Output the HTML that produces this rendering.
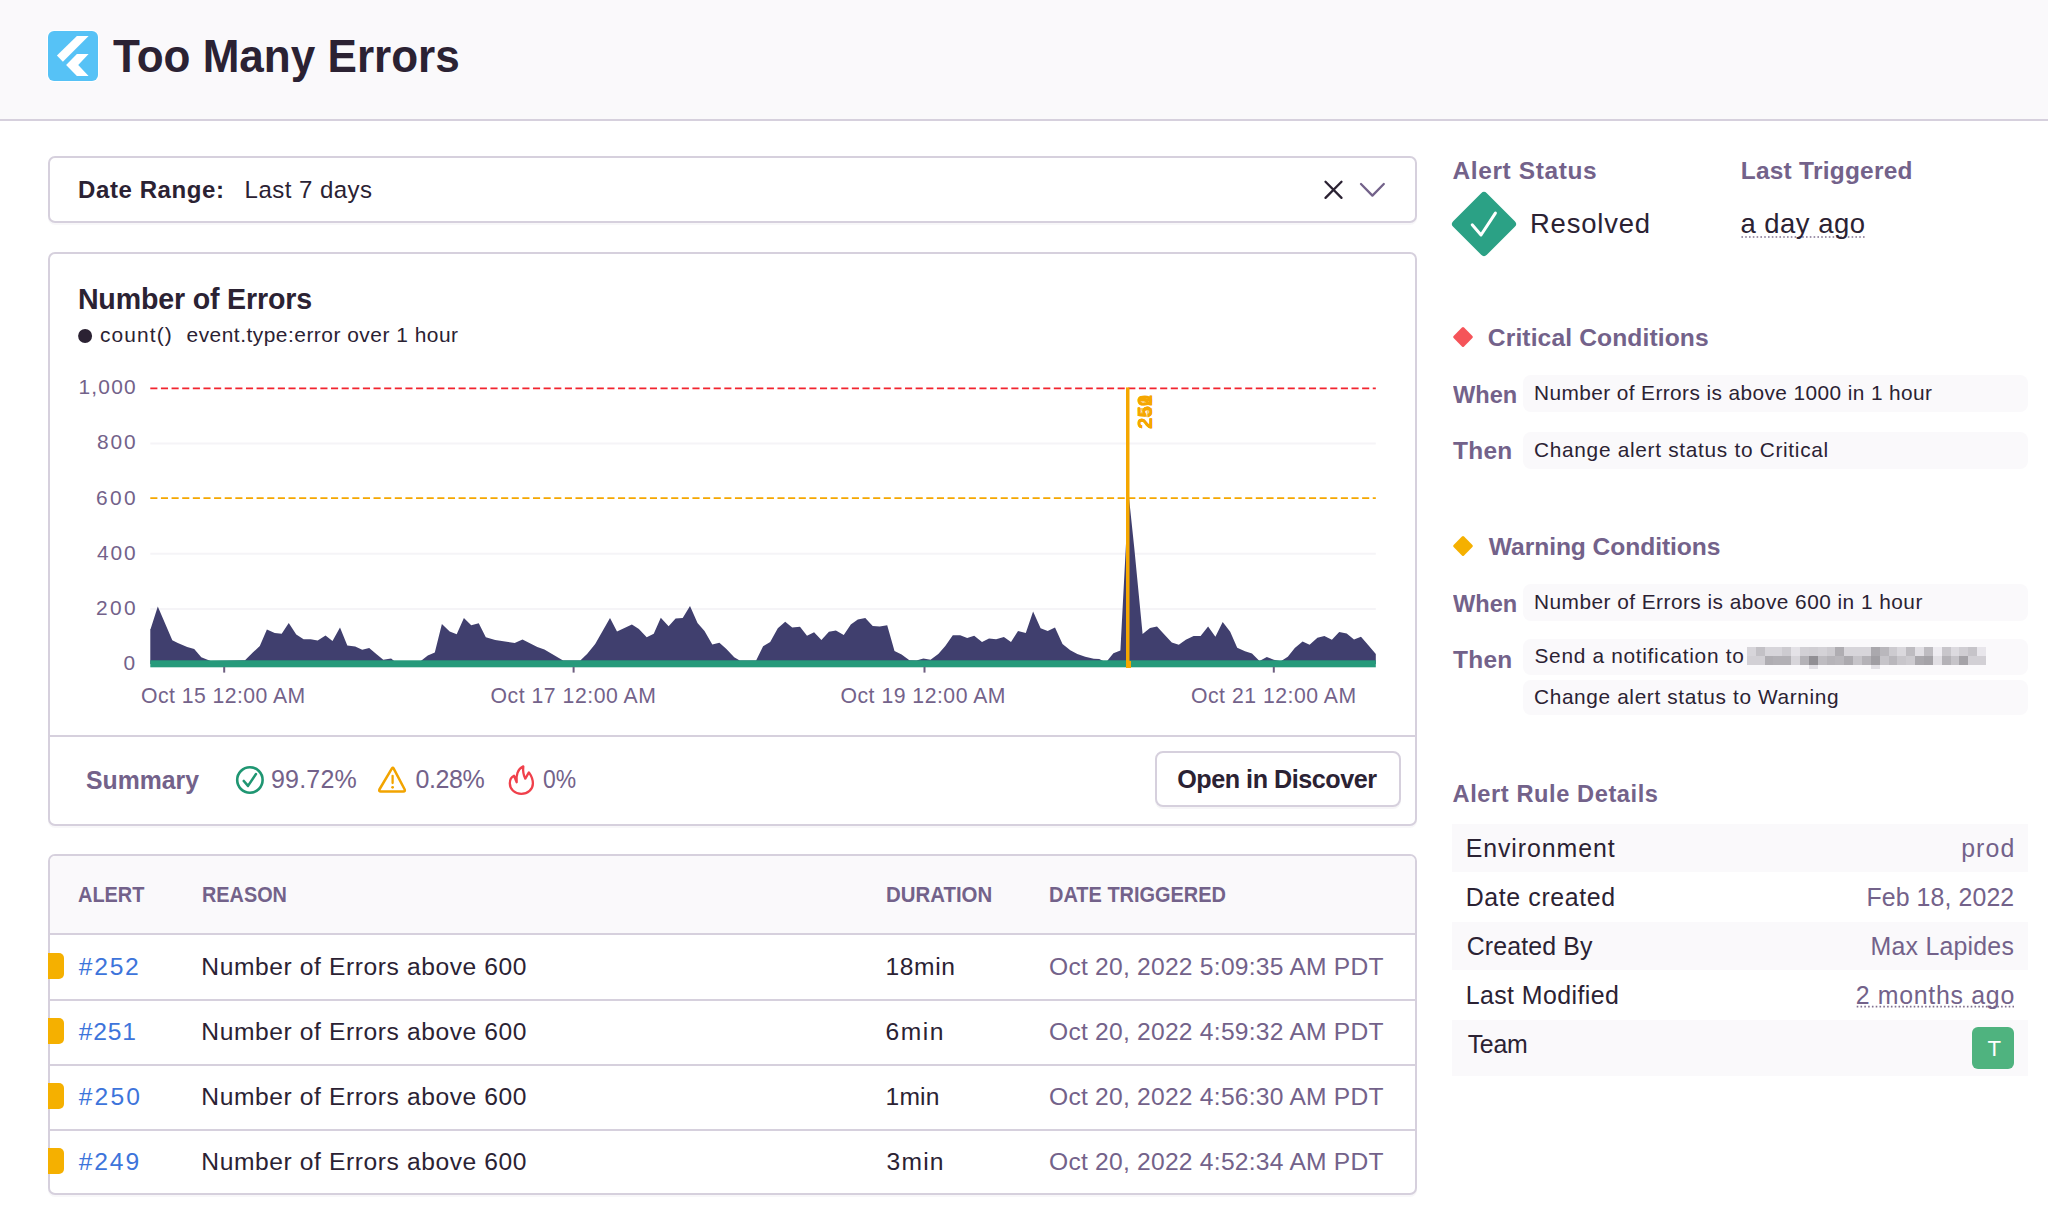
<!DOCTYPE html><html><head><meta charset="utf-8"><style>
html,body{margin:0;padding:0;}body{width:2048px;height:1220px;overflow:hidden;background:#FFFFFF;position:relative;font-family:"Liberation Sans",sans-serif;}
.a{position:absolute;box-sizing:border-box;}
.t{position:absolute;white-space:pre;margin:0;}
.panel{position:absolute;box-sizing:border-box;border:2px solid #D6D0DD;border-radius:7px;background:#fff;box-shadow:0 2px 0 rgba(37,11,54,0.03);}
.cond{position:absolute;background:#FAF9FB;border-radius:8px;}
</style></head><body>
<div class="a" style="left:0;top:0;width:2048px;height:119px;background:#FAF9FB;border-bottom:2px solid #D6D0DD;height:121px"></div>
<div class="panel" style="left:48px;top:156px;width:1369px;height:67px"></div>
<div class="panel" style="left:48px;top:252px;width:1369px;height:574px"></div>
<div class="a" style="left:50px;top:735px;width:1365px;height:2px;background:#D6D0DD"></div>
<div class="a" style="left:1155px;top:751px;width:246px;height:56px;border:2px solid #D6D0DD;border-radius:8px;background:#fff;box-shadow:0 2px 0 rgba(37,11,54,0.04)"></div>
<div class="panel" style="left:48px;top:854px;width:1369px;height:341px;overflow:hidden"><div class="a" style="left:0;top:0;width:100%;height:79px;background:#FAF9FB;border-bottom:2px solid #D6D0DD"></div><div class="a" style="left:0;top:143px;width:100%;height:2px;background:#D6D0DD"></div><div class="a" style="left:0;top:208px;width:100%;height:2px;background:#D6D0DD"></div><div class="a" style="left:0;top:273px;width:100%;height:2px;background:#D6D0DD"></div></div>
<div class="a" style="left:48px;top:953px;width:16px;height:26px;background:#F5B000;border-radius:0 5px 5px 0"></div>
<div class="a" style="left:48px;top:1018px;width:16px;height:26px;background:#F5B000;border-radius:0 5px 5px 0"></div>
<div class="a" style="left:48px;top:1083px;width:16px;height:26px;background:#F5B000;border-radius:0 5px 5px 0"></div>
<div class="a" style="left:48px;top:1148px;width:16px;height:26px;background:#F5B000;border-radius:0 5px 5px 0"></div>
<div class="cond" style="left:1523px;top:375px;width:1506px;height:37px;width:505px"></div>
<div class="cond" style="left:1523px;top:432px;width:1506px;height:37px;width:505px"></div>
<div class="cond" style="left:1523px;top:584px;width:1506px;height:37px;width:505px"></div>
<div class="cond" style="left:1523px;top:638.5px;width:1506px;height:36.5px;width:505px"></div>
<div class="cond" style="left:1523px;top:679.7px;width:1506px;height:35.3px;width:505px"></div>
<div class="a" style="left:1452px;top:824px;width:576px;height:48px;background:#FAF9FB"></div>
<div class="a" style="left:1452px;top:921.5px;width:576px;height:48.2px;background:#FAF9FB"></div>
<div class="a" style="left:1452px;top:1020px;width:576px;height:56px;background:#FAF9FB"></div>
<div class="a" style="left:1972px;top:1027px;width:42px;height:42px;background:#4FB37F;border-radius:6px"></div>
<div class="a" style="left:1746.8px;top:647.2px;width:9.16px;height:8.8px;background:rgb(215,213,218)"></div>
<div class="a" style="left:1755.66px;top:647.2px;width:9.16px;height:8.8px;background:rgb(195,193,198)"></div>
<div class="a" style="left:1764.52px;top:647.2px;width:9.16px;height:8.8px;background:rgb(215,213,218)"></div>
<div class="a" style="left:1773.38px;top:647.2px;width:9.16px;height:8.8px;background:rgb(215,213,218)"></div>
<div class="a" style="left:1782.24px;top:647.2px;width:9.16px;height:8.8px;background:rgb(205,203,208)"></div>
<div class="a" style="left:1791.1px;top:647.2px;width:9.16px;height:8.8px;background:rgb(228,226,231)"></div>
<div class="a" style="left:1799.96px;top:647.2px;width:9.16px;height:8.8px;background:rgb(210,208,213)"></div>
<div class="a" style="left:1808.81px;top:647.2px;width:9.16px;height:8.8px;background:rgb(208,206,211)"></div>
<div class="a" style="left:1817.67px;top:647.2px;width:9.16px;height:8.8px;background:rgb(212,210,215)"></div>
<div class="a" style="left:1826.53px;top:647.2px;width:9.16px;height:8.8px;background:rgb(205,203,208)"></div>
<div class="a" style="left:1835.39px;top:647.2px;width:9.16px;height:8.8px;background:rgb(175,173,178)"></div>
<div class="a" style="left:1844.25px;top:647.2px;width:9.16px;height:8.8px;background:rgb(215,213,218)"></div>
<div class="a" style="left:1853.11px;top:647.2px;width:9.16px;height:8.8px;background:rgb(215,213,218)"></div>
<div class="a" style="left:1861.97px;top:647.2px;width:9.16px;height:8.8px;background:rgb(215,213,218)"></div>
<div class="a" style="left:1870.83px;top:647.2px;width:9.16px;height:8.8px;background:rgb(170,168,173)"></div>
<div class="a" style="left:1879.69px;top:647.2px;width:9.16px;height:8.8px;background:rgb(185,183,188)"></div>
<div class="a" style="left:1888.55px;top:647.2px;width:9.16px;height:8.8px;background:rgb(205,203,208)"></div>
<div class="a" style="left:1897.41px;top:647.2px;width:9.16px;height:8.8px;background:rgb(218,216,221)"></div>
<div class="a" style="left:1906.27px;top:647.2px;width:9.16px;height:8.8px;background:rgb(190,188,193)"></div>
<div class="a" style="left:1915.13px;top:647.2px;width:9.16px;height:8.8px;background:rgb(225,223,228)"></div>
<div class="a" style="left:1923.99px;top:647.2px;width:9.16px;height:8.8px;background:rgb(190,188,193)"></div>
<div class="a" style="left:1932.84px;top:647.2px;width:9.16px;height:8.8px;background:rgb(238,236,241)"></div>
<div class="a" style="left:1941.7px;top:647.2px;width:9.16px;height:8.8px;background:rgb(200,198,203)"></div>
<div class="a" style="left:1950.56px;top:647.2px;width:9.16px;height:8.8px;background:rgb(220,218,223)"></div>
<div class="a" style="left:1959.42px;top:647.2px;width:9.16px;height:8.8px;background:rgb(208,206,211)"></div>
<div class="a" style="left:1968.28px;top:647.2px;width:9.16px;height:8.8px;background:rgb(198,196,201)"></div>
<div class="a" style="left:1977.14px;top:647.2px;width:9.16px;height:8.8px;background:rgb(232,230,235)"></div>
<div class="a" style="left:1746.8px;top:655.95px;width:9.16px;height:8.8px;background:rgb(210,208,213)"></div>
<div class="a" style="left:1755.66px;top:655.95px;width:9.16px;height:8.8px;background:rgb(210,208,213)"></div>
<div class="a" style="left:1764.52px;top:655.95px;width:9.16px;height:8.8px;background:rgb(175,173,178)"></div>
<div class="a" style="left:1773.38px;top:655.95px;width:9.16px;height:8.8px;background:rgb(178,176,181)"></div>
<div class="a" style="left:1782.24px;top:655.95px;width:9.16px;height:8.8px;background:rgb(178,176,181)"></div>
<div class="a" style="left:1791.1px;top:655.95px;width:9.16px;height:8.8px;background:rgb(215,213,218)"></div>
<div class="a" style="left:1799.96px;top:655.95px;width:9.16px;height:8.8px;background:rgb(180,178,183)"></div>
<div class="a" style="left:1808.81px;top:655.95px;width:9.16px;height:8.8px;background:rgb(145,143,148)"></div>
<div class="a" style="left:1817.67px;top:655.95px;width:9.16px;height:8.8px;background:rgb(190,188,193)"></div>
<div class="a" style="left:1826.53px;top:655.95px;width:9.16px;height:8.8px;background:rgb(182,180,185)"></div>
<div class="a" style="left:1835.39px;top:655.95px;width:9.16px;height:8.8px;background:rgb(185,183,188)"></div>
<div class="a" style="left:1844.25px;top:655.95px;width:9.16px;height:8.8px;background:rgb(172,170,175)"></div>
<div class="a" style="left:1853.11px;top:655.95px;width:9.16px;height:8.8px;background:rgb(198,196,201)"></div>
<div class="a" style="left:1861.97px;top:655.95px;width:9.16px;height:8.8px;background:rgb(180,178,183)"></div>
<div class="a" style="left:1870.83px;top:655.95px;width:9.16px;height:8.8px;background:rgb(160,158,163)"></div>
<div class="a" style="left:1879.69px;top:655.95px;width:9.16px;height:8.8px;background:rgb(198,196,201)"></div>
<div class="a" style="left:1888.55px;top:655.95px;width:9.16px;height:8.8px;background:rgb(185,183,188)"></div>
<div class="a" style="left:1897.41px;top:655.95px;width:9.16px;height:8.8px;background:rgb(200,198,203)"></div>
<div class="a" style="left:1906.27px;top:655.95px;width:9.16px;height:8.8px;background:rgb(205,203,208)"></div>
<div class="a" style="left:1915.13px;top:655.95px;width:9.16px;height:8.8px;background:rgb(170,168,173)"></div>
<div class="a" style="left:1923.99px;top:655.95px;width:9.16px;height:8.8px;background:rgb(165,163,168)"></div>
<div class="a" style="left:1932.84px;top:655.95px;width:9.16px;height:8.8px;background:rgb(225,223,228)"></div>
<div class="a" style="left:1941.7px;top:655.95px;width:9.16px;height:8.8px;background:rgb(180,178,183)"></div>
<div class="a" style="left:1950.56px;top:655.95px;width:9.16px;height:8.8px;background:rgb(198,196,201)"></div>
<div class="a" style="left:1959.42px;top:655.95px;width:9.16px;height:8.8px;background:rgb(165,163,168)"></div>
<div class="a" style="left:1968.28px;top:655.95px;width:9.16px;height:8.8px;background:rgb(210,208,213)"></div>
<div class="a" style="left:1977.14px;top:655.95px;width:9.16px;height:8.8px;background:rgb(210,208,213)"></div>
<div class="a" style="left:1808.81px;top:664.7px;width:8.86px;height:4.3px;background:rgb(226,224,229)"></div>
<div class="a" style="left:1870.83px;top:664.7px;width:8.86px;height:4.3px;background:rgb(226,224,229)"></div>
<svg class="a" style="left:0;top:0" width="2048" height="1220" viewBox="0 0 2048 1220"><rect x="47" y="30" width="52" height="52" rx="7" fill="#FFFFFF"/><rect x="48" y="31" width="50" height="50" rx="6" fill="#56C2F6"/><path d="M76.9 36 L88.6 36 L62.9 61.7 L56.9 55.6 Z" fill="#fff"/><path d="M76.9 54.1 L88.6 54.1 L78.2 65.1 L88.6 75.9 L76.9 75.9 L66.1 65.1 Z" fill="#fff"/><path d="M1325.5 181.7 L1341.5 197.9 M1341.5 181.7 L1325.5 197.9" stroke="#2B2233" stroke-width="2.3" stroke-linecap="round"/><path d="M1361 184 L1372.4 195.6 L1383.8 184" stroke="#73628A" stroke-width="2.3" fill="none" stroke-linecap="round" stroke-linejoin="round"/><line x1="150.3" y1="443.45" x2="1375.8" y2="443.45" stroke="#F5F4F7" stroke-width="2"/><line x1="150.3" y1="553.75" x2="1375.8" y2="553.75" stroke="#F5F4F7" stroke-width="2"/><line x1="150.3" y1="608.9" x2="1375.8" y2="608.9" stroke="#F5F4F7" stroke-width="2"/><path d="M150.3 664 L150.3 629 L150.6 629 L157.8 606.4 L172.3 640.3 L177.8 643.1 L187.2 647 L194.2 649 L201.3 657.2 L210.6 661 L245 660.3 L252.8 652.5 L259.8 646 L266.9 629.5 L274.7 633 L281.7 633.75 L288.75 623 L296.25 634.5 L303.6 639.2 L310.6 639.2 L317.7 640.5 L325.5 635.6 L332.5 641.1 L340 627.5 L347.3 645.5 L355.2 646.6 L362.2 649.7 L369.2 648.1 L376.25 654 L383.3 659.8 L391.1 658.4 L394.2 661 L420.8 661 L427.8 655.6 L434.8 652.5 L441.9 624 L449.7 631.4 L456.7 634.2 L463.9 618.1 L471.25 625.2 L478.75 623.3 L485.8 637.2 L495.2 640 L514.7 643.1 L522.5 639.5 L537.3 647 L544.4 649.4 L563.1 660.6 L580.3 660.6 L587.3 653.75 L595.2 643.9 L610 618.1 L617 631.4 L631.9 624.4 L638.9 629 L646.7 637.3 L653.75 633.75 L660.8 617.8 L668.6 626.25 L675.6 618.6 L682.7 618.1 L690 606.1 L697.5 623.1 L704.5 631 L712.3 644.4 L719.4 642.8 L726.4 648.9 L734.2 657.2 L739.7 660.6 L756.1 660.6 L763.1 646.25 L770.2 641.9 L777.8 628.3 L785.2 621.7 L792.2 627.5 L800 626.7 L807 635.8 L814.1 632.2 L821.4 640 L828.9 631.7 L835.9 630.6 L843.75 635 L850.8 624.4 L857.8 619.4 L865.3 618.1 L872.7 626 L879.7 626.4 L887.2 625.2 L894.5 651 L901.6 654.5 L909.4 660.3 L916.4 660.6 L923.4 658.4 L930.5 659.8 L938.3 654 L945.3 646 L952.8 635.3 L960.2 635.3 L967.2 638 L974.2 635.8 L982 642 L989 638.4 L996.1 639.2 L1003.9 636.9 L1011 642 L1018 631 L1025.8 633 L1033.1 611.4 L1040.6 628.3 L1047.7 631 L1055 627.5 L1062.5 643.9 L1070.3 650.2 L1077.3 654 L1085.2 656.7 L1093.75 658.75 L1099.3 659 L1103.2 661 L1107.1 661 L1113.4 653.2 L1120.4 650.4 L1128.6 494 L1134.4 549.2 L1142.6 634 L1150 627.9 L1157 626.6 L1164.8 634.9 L1171.8 642.6 L1178.8 644.7 L1185.8 639.8 L1193.6 636.1 L1200.6 636 L1208.1 626.6 L1215.4 636.7 L1222.7 622.1 L1230.2 631.7 L1237.2 647.8 L1245 651.2 L1252 653.6 L1259.5 661 L1266.8 657.1 L1273.8 659.8 L1280.8 661.3 L1287.8 656.7 L1294.8 648.1 L1302.6 641.6 L1309.6 644.7 L1317.4 637.7 L1324.4 636 L1331.9 639.8 L1339.2 632.1 L1346.7 633.6 L1354 639.5 L1361 636.7 L1368.8 645.8 L1375.8 653.9 L1375.8 664 Z" fill="#403F6E"/><rect x="150.3" y="660.3" width="1225.5" height="7" fill="#269A7B"/><line x1="150.3" y1="388.4" x2="1375.8" y2="388.4" stroke="#F2242F" stroke-width="1.8" stroke-dasharray="7.1 3.53"/><line x1="150.3" y1="498.2" x2="1375.8" y2="498.2" stroke="#F5A700" stroke-width="1.8" stroke-dasharray="7.1 3.53"/><rect x="1126" y="387.4" width="3.5" height="278" fill="#F5A700"/><rect x="1126" y="661" width="5" height="7" fill="#F5A700"/><rect x="223.2" y="667" width="2" height="5.6" fill="#6E5F80"/><rect x="572.6" y="667" width="2" height="5.6" fill="#6E5F80"/><rect x="923.5" y="667" width="2" height="5.6" fill="#6E5F80"/><rect x="1272.8" y="667" width="2" height="5.6" fill="#6E5F80"/><circle cx="249.9" cy="780" r="12.7" stroke="#1F9672" stroke-width="2.6" fill="none"/><path d="M243.8 781 L248 785.9 L255.9 774.1" stroke="#1F9672" stroke-width="2.6" fill="none" stroke-linecap="round" stroke-linejoin="round"/><path d="M392.7 768.2 Q393.5 767 394.3 768.6 L405.3 789.5 Q406 791.5 404 791.5 L381.3 791.5 Q379.3 791.5 380 789.5 Z" transform="translate(-0.6,0)" stroke="#F2A400" stroke-width="2.5" fill="none" stroke-linejoin="round"/><path d="M392.6 775.8 L392.6 783" stroke="#F2A400" stroke-width="2.3" stroke-linecap="round"/><circle cx="392.6" cy="787.3" r="1.4" fill="#F2A400"/><path d="M516.7 782.2 C515.8 776 517.5 769 523.3 766.4 C522.8 771 523.6 775.5 525.3 778.6 L528.9 772.4 C530.8 775 532.9 779.5 532.9 783.6 C532.9 789.5 527.8 793.8 521.3 793.8 C514.8 793.8 509.8 789.2 509.8 783.2 C509.8 779.5 511.7 777 514 775.8 Z" stroke="#F0404B" stroke-width="2.3" fill="none" stroke-linejoin="round"/><circle cx="85.1" cy="336" r="7" fill="#2B2233"/><rect x="1460.2" y="200.2" width="47.6" height="47.6" rx="4" fill="#2BA185" transform="rotate(45 1484 224)"/><path d="M1472.2 224.8 L1481 235 L1495.4 213.1" stroke="#fff" stroke-width="3" fill="none" stroke-linecap="round" stroke-linejoin="round"/><rect x="1455.6" y="329.6" width="14.8" height="14.8" rx="1.5" fill="#F55459" transform="rotate(45 1463 337)"/><rect x="1455.6" y="538.6" width="14.8" height="14.8" rx="1.5" fill="#F5B000" transform="rotate(45 1463 546)"/><line x1="1741.4" y1="237" x2="1866" y2="237" stroke="#80708F" stroke-width="1.6" stroke-dasharray="1.6 2.2"/><line x1="1856.7" y1="1006.6" x2="2014" y2="1006.6" stroke="#80708F" stroke-width="1.6" stroke-dasharray="1.6 2.2"/></svg>
<div class="t" style="left:1135px;top:429px;transform-origin:0 0;transform:rotate(-90deg);font:bold 20.5px/20.5px 'Liberation Sans';color:#F5A700;opacity:1">250</div>
<div class="t" style="left:1135px;top:429px;transform-origin:0 0;transform:rotate(-90deg);font:bold 20.5px/20.5px 'Liberation Sans';color:#F5A700;opacity:1">251</div>
<div class="t" style="left:1135px;top:429px;transform-origin:0 0;transform:rotate(-90deg);font:bold 20.5px/20.5px 'Liberation Sans';color:#F5A700;opacity:1">252</div>
<div class="t" style="left:1135px;top:429px;transform-origin:0 0;transform:rotate(-90deg);font:bold 20.5px/20.5px 'Liberation Sans';color:#F5A700;opacity:0.6">249</div>
<div class="t" style="left:112.6px;top:33.01px;font-size:46.23px;line-height:46.23px;font-weight:bold;letter-spacing:0px;color:#2B2233;transform-origin:0 0;transform:scaleX(0.953)">Too Many Errors</div>
<div class="t" style="left:78px;top:177.7px;font-size:24.04px;line-height:24.04px;font-weight:bold;letter-spacing:0.58px;color:#2B2233">Date Range:</div>
<div class="t" style="left:244.6px;top:177.7px;font-size:24.04px;line-height:24.04px;letter-spacing:0.45px;color:#2B2233">Last 7 days</div>
<div class="t" style="left:77.9px;top:285px;font-size:28.59px;line-height:28.59px;font-weight:bold;letter-spacing:-0.16px;color:#2B2233">Number of Errors</div>
<div class="t" style="left:100px;top:325px;font-size:20.91px;line-height:20.91px;letter-spacing:1.1px;color:#2B2233">count()</div>
<div class="t" style="left:186.5px;top:325px;font-size:20.91px;line-height:20.91px;letter-spacing:0.5px;color:#2B2233">event.type:error over 1 hour</div>
<div class="t" style="left:78.5px;top:377.31px;font-size:20.91px;line-height:20.91px;letter-spacing:1.2px;color:#73628A">1,000</div>
<div class="t" style="left:96.9px;top:432.46px;font-size:20.91px;line-height:20.91px;letter-spacing:1.92px;color:#73628A">800</div>
<div class="t" style="left:95.9px;top:487.6px;font-size:20.91px;line-height:20.91px;letter-spacing:2.42px;color:#73628A">600</div>
<div class="t" style="left:96.9px;top:542.75px;font-size:20.91px;line-height:20.91px;letter-spacing:1.92px;color:#73628A">400</div>
<div class="t" style="left:95.9px;top:597.91px;font-size:20.91px;line-height:20.91px;letter-spacing:2.42px;color:#73628A">200</div>
<div class="t" style="left:123.5px;top:653.06px;font-size:20.91px;line-height:20.91px;letter-spacing:0px;color:#73628A">0</div>
<div class="t" style="left:141px;top:684.9px;font-size:21.19px;line-height:21.19px;letter-spacing:0.46px;color:#73628A">Oct 15 12:00 AM</div>
<div class="t" style="left:490.6px;top:684.9px;font-size:21.19px;line-height:21.19px;letter-spacing:0.53px;color:#73628A">Oct 17 12:00 AM</div>
<div class="t" style="left:840.5px;top:684.9px;font-size:21.19px;line-height:21.19px;letter-spacing:0.51px;color:#73628A">Oct 19 12:00 AM</div>
<div class="t" style="left:1191px;top:684.9px;font-size:21.19px;line-height:21.19px;letter-spacing:0.52px;color:#73628A">Oct 21 12:00 AM</div>
<div class="t" style="left:85.6px;top:766.5px;font-size:26.32px;line-height:26.32px;font-weight:bold;letter-spacing:0px;color:#73628A;transform-origin:0 0;transform:scaleX(0.9427)">Summary</div>
<div class="t" style="left:271px;top:767.01px;font-size:25.04px;line-height:25.04px;letter-spacing:0.19px;color:#73628A">99.72%</div>
<div class="t" style="left:415.4px;top:767.01px;font-size:25.04px;line-height:25.04px;letter-spacing:-0.41px;color:#73628A">0.28%</div>
<div class="t" style="left:542.5px;top:767.01px;font-size:25.04px;line-height:25.04px;letter-spacing:0px;color:#73628A;transform-origin:0 0;transform:scaleX(0.9159)">0%</div>
<div class="t" style="left:1177.2px;top:767.11px;font-size:25.18px;line-height:25.18px;font-weight:bold;letter-spacing:-0.48px;color:#2B2233">Open in Discover</div>
<div class="t" style="left:78.4px;top:884.81px;font-size:21.48px;line-height:21.48px;font-weight:bold;letter-spacing:0px;color:#73628A;transform-origin:0 0;transform:scaleX(0.928)">ALERT</div>
<div class="t" style="left:202.38px;top:884.81px;font-size:21.48px;line-height:21.48px;font-weight:bold;letter-spacing:0px;color:#73628A;transform-origin:0 0;transform:scaleX(0.9242)">REASON</div>
<div class="t" style="left:885.55px;top:884.81px;font-size:21.48px;line-height:21.48px;font-weight:bold;letter-spacing:0px;color:#73628A;transform-origin:0 0;transform:scaleX(0.951)">DURATION</div>
<div class="t" style="left:1049.07px;top:884.81px;font-size:21.48px;line-height:21.48px;font-weight:bold;letter-spacing:0px;color:#73628A;transform-origin:0 0;transform:scaleX(0.9294)">DATE TRIGGERED</div>
<div class="t" style="left:78.8px;top:955.01px;font-size:24.61px;line-height:24.61px;letter-spacing:1.75px;color:#3D74DB">#252</div>
<div class="t" style="left:201.3px;top:955.01px;font-size:24.61px;line-height:24.61px;letter-spacing:0.59px;color:#2B2233">Number of Errors above 600</div>
<div class="t" style="left:885.5px;top:955.01px;font-size:24.61px;line-height:24.61px;letter-spacing:0.61px;color:#2B2233">18min</div>
<div class="t" style="left:1049px;top:955.01px;font-size:24.61px;line-height:24.61px;letter-spacing:0.24px;color:#73628A">Oct 20, 2022 5:09:35 AM PDT</div>
<div class="t" style="left:78.8px;top:1020.01px;font-size:24.61px;line-height:24.61px;letter-spacing:0.78px;color:#3D74DB">#251</div>
<div class="t" style="left:201.3px;top:1020.01px;font-size:24.61px;line-height:24.61px;letter-spacing:0.59px;color:#2B2233">Number of Errors above 600</div>
<div class="t" style="left:885.5px;top:1020.01px;font-size:24.61px;line-height:24.61px;letter-spacing:1.55px;color:#2B2233">6min</div>
<div class="t" style="left:1049px;top:1020.01px;font-size:24.61px;line-height:24.61px;letter-spacing:0.24px;color:#73628A">Oct 20, 2022 4:59:32 AM PDT</div>
<div class="t" style="left:78.8px;top:1085.01px;font-size:24.61px;line-height:24.61px;letter-spacing:2.11px;color:#3D74DB">#250</div>
<div class="t" style="left:201.3px;top:1085.01px;font-size:24.61px;line-height:24.61px;letter-spacing:0.59px;color:#2B2233">Number of Errors above 600</div>
<div class="t" style="left:885.5px;top:1085.01px;font-size:24.61px;line-height:24.61px;letter-spacing:0.21px;color:#2B2233">1min</div>
<div class="t" style="left:1049px;top:1085.01px;font-size:24.61px;line-height:24.61px;letter-spacing:0.24px;color:#73628A">Oct 20, 2022 4:56:30 AM PDT</div>
<div class="t" style="left:78.8px;top:1150.01px;font-size:24.61px;line-height:24.61px;letter-spacing:1.85px;color:#3D74DB">#249</div>
<div class="t" style="left:201.3px;top:1150.01px;font-size:24.61px;line-height:24.61px;letter-spacing:0.59px;color:#2B2233">Number of Errors above 600</div>
<div class="t" style="left:886.5px;top:1150.01px;font-size:24.61px;line-height:24.61px;letter-spacing:1.22px;color:#2B2233">3min</div>
<div class="t" style="left:1049px;top:1150.01px;font-size:24.61px;line-height:24.61px;letter-spacing:0.24px;color:#73628A">Oct 20, 2022 4:52:34 AM PDT</div>
<div class="t" style="left:1452.5px;top:159px;font-size:24.47px;line-height:24.47px;font-weight:bold;letter-spacing:0.62px;color:#73628A">Alert Status</div>
<div class="t" style="left:1740.7px;top:159px;font-size:24.47px;line-height:24.47px;font-weight:bold;letter-spacing:0.25px;color:#73628A">Last Triggered</div>
<div class="t" style="left:1530px;top:209.9px;font-size:27.45px;line-height:27.45px;letter-spacing:0.8px;color:#2B2233">Resolved</div>
<div class="t" style="left:1740.4px;top:209.9px;font-size:27.45px;line-height:27.45px;letter-spacing:0.52px;color:#2B2233">a day ago</div>
<div class="t" style="left:1487.8px;top:325.61px;font-size:24.61px;line-height:24.61px;font-weight:bold;letter-spacing:0.12px;color:#73628A">Critical Conditions</div>
<div class="t" style="left:1453.2px;top:382.6px;font-size:24.47px;line-height:24.47px;font-weight:bold;letter-spacing:0px;color:#73628A;transform-origin:0 0;transform:scaleX(0.9642)">When</div>
<div class="t" style="left:1534px;top:382.6px;font-size:20.84px;line-height:20.84px;letter-spacing:0.41px;color:#2B2233">Number of Errors is above 1000 in 1 hour</div>
<div class="t" style="left:1453px;top:439.1px;font-size:24.47px;line-height:24.47px;font-weight:bold;letter-spacing:0.27px;color:#73628A">Then</div>
<div class="t" style="left:1534px;top:439.5px;font-size:20.84px;line-height:20.84px;letter-spacing:0.7px;color:#2B2233">Change alert status to Critical</div>
<div class="t" style="left:1488.8px;top:535.21px;font-size:24.61px;line-height:24.61px;font-weight:bold;letter-spacing:-0.07px;color:#73628A">Warning Conditions</div>
<div class="t" style="left:1453.2px;top:591.91px;font-size:24.47px;line-height:24.47px;font-weight:bold;letter-spacing:0px;color:#73628A;transform-origin:0 0;transform:scaleX(0.9642)">When</div>
<div class="t" style="left:1534px;top:591.75px;font-size:20.84px;line-height:20.84px;letter-spacing:0.47px;color:#2B2233">Number of Errors is above 600 in 1 hour</div>
<div class="t" style="left:1453px;top:648.41px;font-size:24.47px;line-height:24.47px;font-weight:bold;letter-spacing:0.27px;color:#73628A">Then</div>
<div class="t" style="left:1534.5px;top:646px;font-size:20.84px;line-height:20.84px;letter-spacing:0.7px;color:#2B2233">Send a notification to</div>
<div class="t" style="left:1534px;top:687px;font-size:20.84px;line-height:20.84px;letter-spacing:0.63px;color:#2B2233">Change alert status to Warning</div>
<div class="t" style="left:1452.6px;top:783.21px;font-size:23.61px;line-height:23.61px;font-weight:bold;letter-spacing:0.58px;color:#73628A">Alert Rule Details</div>
<div class="t" style="left:1465.7px;top:835.7px;font-size:24.89px;line-height:24.89px;letter-spacing:0.93px;color:#2B2233">Environment</div>
<div class="t" style="left:1961.2px;top:835.7px;font-size:24.89px;line-height:24.89px;letter-spacing:1.08px;color:#73628A">prod</div>
<div class="t" style="left:1465.7px;top:884.7px;font-size:24.89px;line-height:24.89px;letter-spacing:0.64px;color:#2B2233">Date created</div>
<div class="t" style="left:1866.4px;top:884.7px;font-size:24.89px;line-height:24.89px;letter-spacing:0.11px;color:#73628A">Feb 18, 2022</div>
<div class="t" style="left:1466.7px;top:933.7px;font-size:24.89px;line-height:24.89px;letter-spacing:0.14px;color:#2B2233">Created By</div>
<div class="t" style="left:1870.6px;top:933.7px;font-size:24.89px;line-height:24.89px;letter-spacing:0.22px;color:#73628A">Max Lapides</div>
<div class="t" style="left:1465.7px;top:982.7px;font-size:24.89px;line-height:24.89px;letter-spacing:0.43px;color:#2B2233">Last Modified</div>
<div class="t" style="left:1855.7px;top:982.7px;font-size:24.89px;line-height:24.89px;letter-spacing:0.71px;color:#73628A">2 months ago</div>
<div class="t" style="left:1467.7px;top:1031.7px;font-size:24.89px;line-height:24.89px;letter-spacing:-0.27px;color:#2B2233">Team</div>
<div class="t" style="left:1987.4px;top:1037.61px;font-size:22.19px;line-height:22.19px;letter-spacing:0px;color:#FFFFFF">T</div>
</body></html>
